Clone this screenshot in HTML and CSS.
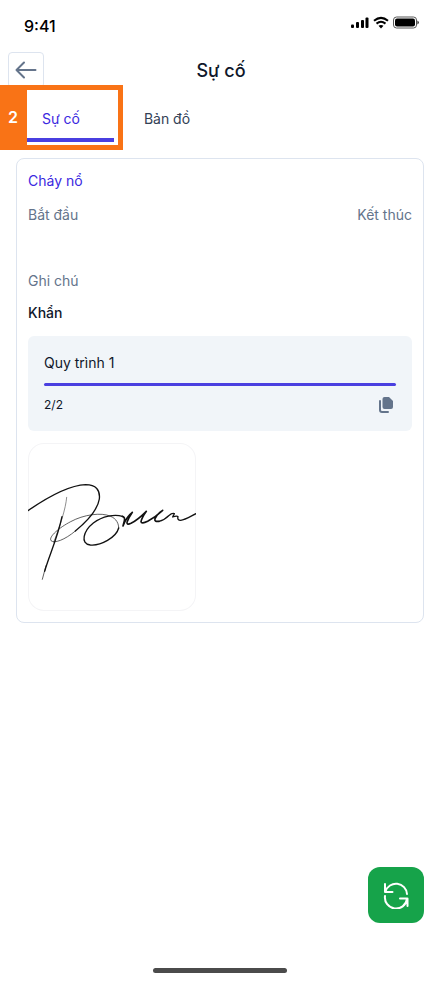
FILE: index.html
```html
<!DOCTYPE html>
<html lang="vi">
<head>
<meta charset="utf-8">
<meta name="viewport" content="width=device-width, initial-scale=1">
<title>Sự cố</title>
<link rel="stylesheet" href="styles.css">
</head>
<body>
<div class="screen">
  <div class="status">
    <span class="time">9:41</span>
    <svg class="status-icons" width="70" height="14" viewBox="0 0 70 14" aria-hidden="true">
      <rect x="1" y="8.500" width="3" height="3.500" rx="1"/>
      <rect x="6" y="6" width="3" height="6" rx="1"/>
      <rect x="11" y="4" width="3" height="8" rx="1"/>
      <rect x="15.500" y="1.500" width="3" height="10.500" rx="1"/>
      <path class="wifi" d="M24 4.800Q31 -1 38 4.800M26.500 7.600Q31 4 35.500 7.600"/>
      <path d="M28.500 9.800Q31 8 33.500 9.800L31 12.500Z"/>
      <rect class="battery" x="43.500" y="1" width="23" height="11" rx="3"/>
      <rect x="45" y="2.500" width="20" height="8" rx="2"/>
      <path d="M67.500 4.500Q70 6.500 67.500 8.500Z"/>
    </svg>
  </div>
  <header class="header">
    <button class="back" type="button" aria-label="Quay lại">
      <svg width="22" height="18" viewBox="0 0 22 18" aria-hidden="true"><path d="M20.500 9H1.500M9 1.500L1.500 9L9 16.500"/></svg>
    </button>
    <h1 class="title">Sự cố</h1>
  </header>
  <nav class="tabs">
    <a class="tab active" href="#su-co">Sự cố</a>
    <a class="tab" href="#ban-do">Bản đồ</a>
    <div class="marker">2</div>
  </nav>
  <main class="main" id="su-co">
    <article class="card">
      <h2 class="name">Cháy nổ</h2>
      <div class="dates"><span>Bắt đầu</span><span>Kết thúc</span></div>
      <p class="label">Ghi chú</p>
      <p class="note">Khẩn</p>
      <section class="process">
        <h3 class="process-name">Quy trình 1</h3>
        <div class="bar" role="progressbar" aria-label="Quy trình 1" aria-valuenow="2" aria-valuemin="0" aria-valuemax="2"></div>
        <div class="process-foot">
          <span>2/2</span>
          <button class="copy" type="button" aria-label="Tài liệu">
            <svg width="16" height="18" viewBox="0 0 16 18" aria-hidden="true">
              <path class="sheet" d="M6.500 1H11L15 5V11Q15 13 13 13H6.500Q4.500 13 4.500 11V3Q4.500 1 6.500 1Z"/>
              <path class="behind" d="M2 5V14Q2 16 4 16H10"/>
            </svg>
          </button>
        </div>
      </section>
      <div class="signature">
        <svg viewBox="24 24 504 504" role="img" aria-label="Chữ ký">
          <path class="medium" d="M24 227C82 187 145 151 197 149C228 149 241 165 238 192C233 225 200 260 166 288"/>
          <path class="thin" d="M166 288C134 315 103 326 93 317C85 305 119 277 152 260C190 239 244 231 272 244C289 251 297 266 296 281"/>
          <path class="hair" d="M140 187C137 222 121 270 101 322"/>
          <path class="medium" d="M126 245C112 311 88 360 74 409"/>
          <path class="thin" d="M78 392L67 433"/>
          <path class="medium" d="M296 279C289 307 242 333 211 330C179 326 191 287 220 264C248 243 284 237 307 244"/>
          <path class="pen" d="M307 244Q316 246 313 258L309 273Q320 244 337 232Q326 248 321 262Q320 271 333 265Q354 254 379 229Q366 247 363 260Q364 268 383 259Q407 246 428 226Q412 236 405 251Q402 261 417 259"/>
          <path class="medium" d="M417 259Q432 256 446 242Q457 233 463 236L458 246Q471 241 474 245Q471 256 482 256C495 255 512 244 528 236"/>
        </svg>
      </div>
    </article>
  </main>
  <footer class="footer">
    <button class="refresh" type="button" aria-label="Làm mới">
      <svg width="28" height="28" viewBox="0 0 28 28" aria-hidden="true">
        <path d="M3 3V11H10.500M3.500 10.500A11 11 0 0 1 25 13M25.500 25V17.500H18M25 18A11 11 0 0 1 3 15"/>
      </svg>
    </button>
    <div class="home-bar"></div>
  </footer>
</div>
</body>
</html>
```
FILE: styles.css
```css
* { box-sizing: border-box; }
body {
  margin: 0;
  background: #fff;
  color: #0f172a;
  font-family: Inter, "Liberation Sans", sans-serif;
  font-size: 14px;
  line-height: 20px;
}
h1, h2, h3, p { margin: 0; font-weight: 400; }
button { padding: 0; border: 0; background: none; font: inherit; }
svg { display: block; }
.screen { min-height: 100vh; display: flex; flex-direction: column; }

.status {
  display: flex;
  justify-content: space-between;
  align-items: center;
  height: 52px;
  padding: 0 20px 0 24px;
  color: #000;
}
.time { font-size: 16px; font-weight: 500; }
.status-icons { margin-bottom: 6px; fill: #000; }
.wifi { fill: none; stroke: #000; stroke-width: 2; }
.battery { fill: none; stroke: #555; }

.header {
  display: grid;
  grid-template-columns: 36px 1fr 36px;
  align-items: center;
  padding: 0 8px;
}
.back {
  display: grid;
  place-items: center;
  height: 36px;
  border: 1px solid #dde4ef;
  border-radius: 4px;
}
.back path { fill: none; stroke: #64748b; stroke-width: 2; stroke-linecap: round; stroke-linejoin: round; }
.title { padding: 2px 0 0 2px; font-size: 18px; font-weight: 500; text-align: center; }

.tabs {
  position: relative;
  display: grid;
  grid-template-columns: repeat(4, 1fr);
  margin-top: 8px;
  padding: 0 8px;
}
.tab {
  padding: 13px 0 9px;
  border-bottom: 4px solid transparent;
  color: #334155;
  text-align: center;
  text-decoration: none;
}
.tab.active { color: #3b28e0; border-color: #4a3fe0; }
.marker {
  position: absolute;
  top: -11px;
  left: 0;
  width: 28%;
  height: 65px;
  padding-left: 3px;
  border: 5px solid #f97316;
  border-left-width: 27px;
  color: #fff;
  font-size: 16px;
  font-weight: 600;
  line-height: 55px;
  text-indent: -22px;
}

.main { flex: 1; padding: 16px; }
.card {
  padding: 12px 11px 11px;
  border: 1px solid #dde4ef;
  border-radius: 8px;
}
.name { font-size: 14px; line-height: 20px; color: #3b28e0; }
.dates { display: flex; justify-content: space-between; margin-top: 14px; color: #64748b; }
.label { margin-top: 46px; color: #64748b; }
.note { margin-top: 12px; font-weight: 500; }
.process {
  margin-top: 13px;
  padding: 17px 16px 16px;
  border-radius: 6px;
  background: #f1f5f9;
}
.process-name { font-size: 14px; }
.bar { height: 3px; margin-top: 10px; border-radius: 2px; background: #4a3fe0; }
.process-foot {
  display: flex;
  justify-content: space-between;
  align-items: center;
  margin-top: 9px;
  padding-right: 2px;
  font-size: 12px;
}
.sheet { fill: #64748b; }
.behind { fill: none; stroke: #64748b; stroke-width: 2; stroke-linecap: round; }
.signature {
  width: 168px;
  margin-top: 12px;
  border-radius: 16px;
  box-shadow: inset 0 0 0 1px #f4f4f6;
}
.signature path { fill: none; stroke: #111; stroke-linecap: round; stroke-linejoin: round; }
.signature .medium { stroke-width: 4; }
.signature .thin { stroke-width: 2; }
.signature .hair { stroke-width: 2; stroke: #555; }
.signature .pen { stroke-width: 5; }

.footer {
  display: flex;
  flex-direction: column;
  align-items: flex-end;
  gap: 45px;
  padding: 0 16px 17px;
}
.refresh {
  display: grid;
  place-items: center;
  width: 56px;
  height: 56px;
  border-radius: 12px;
  background: #16a34a;
}
.refresh path { fill: none; stroke: #fff; stroke-width: 2; stroke-linecap: round; stroke-linejoin: round; }
.home-bar {
  align-self: center;
  width: 134px;
  height: 5px;
  border-radius: 3px;
  background: #4b4b4b;
}
```
